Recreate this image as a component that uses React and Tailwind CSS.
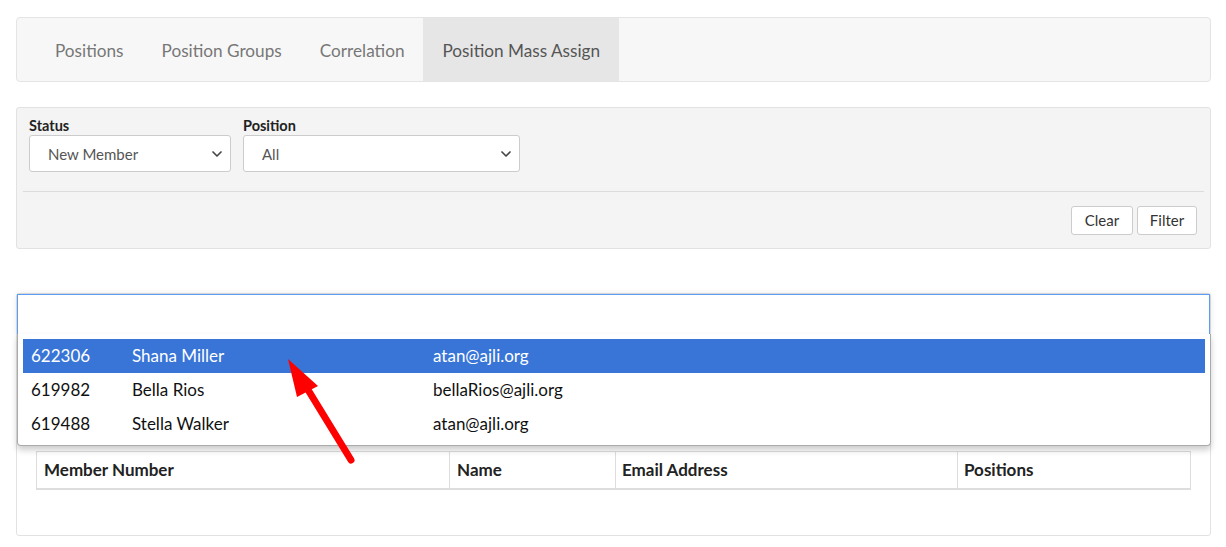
import { ChevronDown } from 'lucide-react';

const tabs = ['Positions', 'Position Groups', 'Correlation', 'Position Mass Assign'];

const members = [
  { number: '622306', name: 'Shana Miller', email: 'atan@ajli.org', active: true },
  { number: '619982', name: 'Bella Rios', email: 'bellaRios@ajli.org' },
  { number: '619488', name: 'Stella Walker', email: 'atan@ajli.org' },
];

function Select({ value, width }) {
  return (
    <div className={`flex h-[37px] items-center justify-between rounded-[3px] border border-[#ccc] bg-white pl-[18px] pr-[5px] text-[15px] text-[#555] ${width}`}>
      <span className="pt-[2px]">{value}</span>
      <ChevronDown className="h-4 w-4 text-[#444]" strokeWidth={2.5} />
    </div>
  );
}

export default function App() {
  return (
    <div className="min-h-[547px] bg-white px-4 pt-[17px] font-['Lato','Liberation_Sans',sans-serif]">
      {/* tabs */}
      <div className="flex h-[65px] w-[1195px] items-stretch rounded-[4px] border border-[#e4e4e4] bg-[#f7f7f7] pl-[19px]">
        {tabs.map((tab, i) => (
          <div
            key={tab}
            className={`flex items-center px-[19px] pt-[3px] text-[17.2px] ${i === 3 ? 'bg-[#e6e6e6] text-[#555]' : 'text-[#777]'}`}
          >
            {tab}
          </div>
        ))}
      </div>

      {/* filter */}
      <div className="mt-[25px] h-[142px] w-[1195px] rounded-[3px] border border-[#e2e2e2] bg-[#f4f4f4] px-[6px] pt-[9px]">
        <div className="flex gap-[12px] px-[6px]">
          <div className="flex flex-col">
            <label className="text-[14.5px] font-bold leading-[18px] text-[#222]">Status</label>
            <Select value="New Member" width="w-[202px]" />
          </div>
          <div className="flex flex-col">
            <label className="text-[14.5px] font-bold leading-[18px] text-[#222]">Position</label>
            <Select value="All" width="w-[277px]" />
          </div>
        </div>
        <div className="mt-[19px] border-t border-[#dcdcdc]" />
        <div className="mt-[14px] flex justify-end gap-[4px] pr-[7px]">
          <button className="h-[29px] w-[62px] rounded-[3px] border border-[#ccc] bg-white text-[15px] text-[#333]">Clear</button>
          <button className="h-[29px] w-[60px] rounded-[3px] border border-[#ccc] bg-white text-[15px] text-[#333]">Filter</button>
        </div>
      </div>

      {/* assign card */}
      <div className="relative mt-[44px] h-[243px] w-[1195px] rounded-[3px] border border-[#e2e2e2] bg-white">
        <div className="h-[42px] border border-[#5b9cf5] bg-white shadow-[0_0_6px_rgba(0,0,0,0.12)]" />
        <div className="px-[19px] pt-[115px]">
          <div className="grid grid-cols-[412px_166px_342px_1fr] border border-[#ddd] border-b-2 text-[17px] font-bold leading-[22px] text-[#222]">
            <div className="px-[7px] py-[7px]">Member Number</div>
            <div className="border-l border-[#ddd] px-[7px] py-[7px]">Name</div>
            <div className="border-l border-[#ddd] px-[6px] py-[7px]">Email Address</div>
            <div className="border-l border-[#ddd] px-[6px] py-[7px]">Positions</div>
          </div>
        </div>

        {/* autocomplete results */}
        <div className="absolute left-0 top-[40px] w-[1194px] rounded-b-[4px] border border-t-0 border-[#aaa] bg-white px-[5px] pb-[4px] pt-[5px] shadow-[0_4px_6px_rgba(0,0,0,0.2)]">
          {members.map(m => (
            <div
              key={m.number}
              className={`flex h-[34px] items-center text-[17px] ${m.active ? 'bg-[#3875d7] text-white' : 'text-[#111]'}`}
            >
              <span className="w-[109px] pl-[8px]">{m.number}</span>
              <span className="w-[301px]">{m.name}</span>
              <span>{m.email}</span>
            </div>
          ))}
        </div>
      </div>

      {/* red arrow annotation */}
      <svg className="pointer-events-none absolute left-0 top-0" width="1226" height="547">
        <line x1="351" y1="460" x2="302" y2="380" stroke="#ff0000" strokeWidth="7" strokeLinecap="round" />
        <polygon points="288,359 318,386 297,397" fill="#ff0000" />
      </svg>
    </div>
  );
}
